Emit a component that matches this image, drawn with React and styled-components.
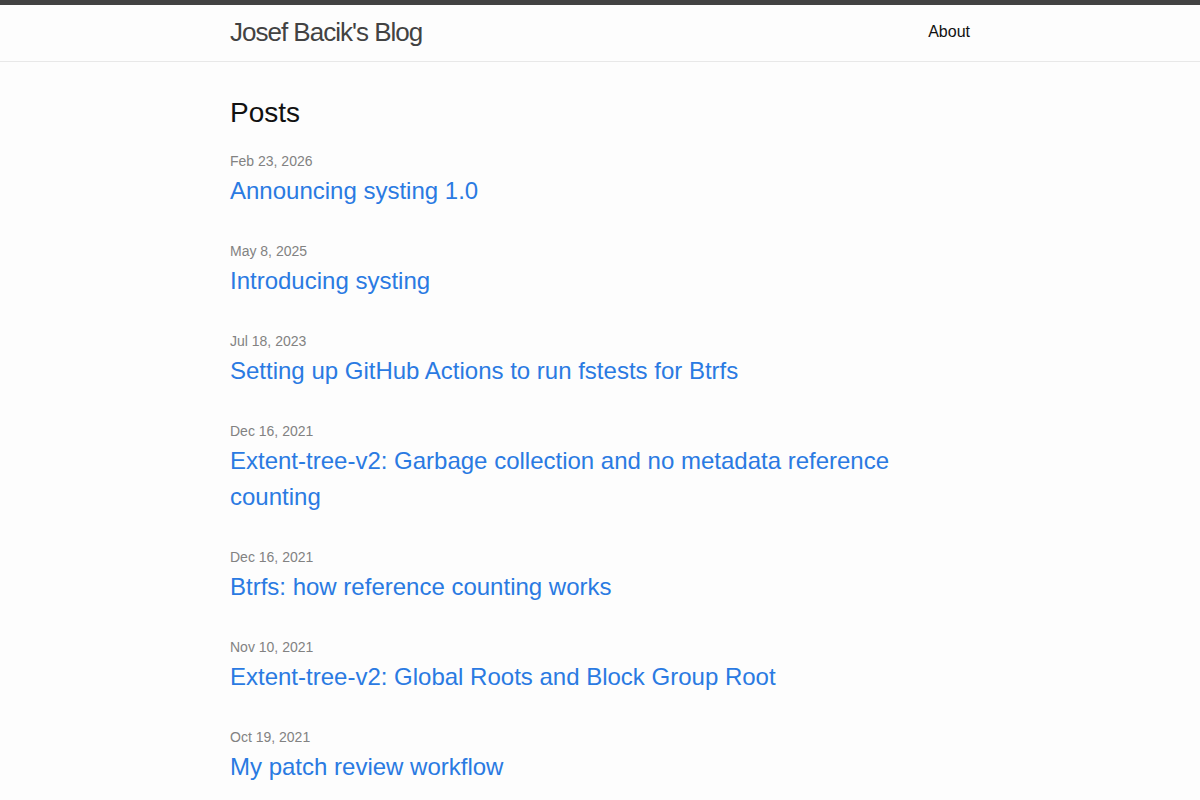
import React from "react"
import styled, { createGlobalStyle } from 'styled-components'

const posts = [
  { date: 'Feb 23, 2026', title: 'Announcing systing 1.0' },
  { date: 'May 8, 2025', title: 'Introducing systing' },
  { date: 'Jul 18, 2023', title: 'Setting up GitHub Actions to run fstests for Btrfs' },
  { date: 'Dec 16, 2021', title: 'Extent-tree-v2: Garbage collection and no metadata reference counting' },
  { date: 'Dec 16, 2021', title: 'Btrfs: how reference counting works' },
  { date: 'Nov 10, 2021', title: 'Extent-tree-v2: Global Roots and Block Group Root' },
  { date: 'Oct 19, 2021', title: 'My patch review workflow' },
]

const App = () => {
  return (
    <>
      <GlobalStyle />
      <Header>
        <Wrapper>
          <SiteTitle href="#">Josef Bacik's Blog</SiteTitle>
          <Nav>
            <NavLink href="#">About</NavLink>
          </Nav>
        </Wrapper>
      </Header>
      <Main>
        <Wrapper as="div">
          <Column>
            <Heading>Posts</Heading>
            <PostList>
              {posts.map((p, i) => (
                <li key={i}>
                  <PostMeta>{p.date}</PostMeta>
                  <PostTitle><PostLink href="#">{p.title}</PostLink></PostTitle>
                </li>
              ))}
            </PostList>
          </Column>
        </Wrapper>
      </Main>
    </>
  )
}

// styles

const GlobalStyle = createGlobalStyle`
  html, body {
    margin: 0;
    padding: 0;
    background: #fdfdfd;
    color: #111;
    font-family: "Liberation Sans", Arial, sans-serif;
    font-size: 16px;
    line-height: 1.5;
  }
`

const Header = styled.header`
  border-top: 5px solid #424242;
  border-bottom: 1px solid #e8e8e8;
  min-height: 56px;
  background: #fdfdfd;
`

const Wrapper = styled.div`
  max-width: 740px;
  margin: 0 auto;
  display: flex;
  justify-content: space-between;
  align-items: flex-start;
`

const SiteTitle = styled.a`
  font-size: 26px;
  line-height: 54px;
  letter-spacing: -1px;
  color: #424242;
  text-decoration: none;
`

const Nav = styled.nav`
  line-height: 54px;
`

const NavLink = styled.a`
  color: #111;
  text-decoration: none;
  font-size: 16px;
`

const Main = styled.main`
  padding: 30px 0 30px;
`

const Column = styled.div`
  width: 100%;
`

const Heading = styled.h1`
  font-size: 28px;
  font-weight: 400;
  line-height: 42px;
  margin: 0 0 16px;
`

const PostList = styled.ul`
  list-style: none;
  margin: 0;
  padding: 0;

  li {
    margin-bottom: 31px;
  }
`

const PostMeta = styled.span`
  display: block;
  font-size: 14px;
  line-height: 23px;
  color: #828282;
`

const PostTitle = styled.h3`
  margin: 0;
  font-size: 24px;
  font-weight: 400;
  line-height: 36px;
`

const PostLink = styled.a`
  color: #2a7ae2;
  text-decoration: none;
`

export default App
